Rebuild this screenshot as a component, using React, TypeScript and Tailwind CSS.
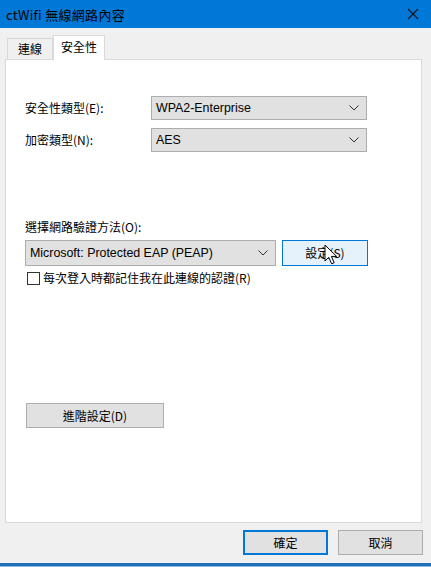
import React from "react";

const font = { fontFamily: '"Noto Sans CJK TC", "Noto Sans", sans-serif' };

function Chevron() {
  return (
    <svg width="10" height="6" viewBox="0 0 10 6" className="shrink-0">
      <path d="M0.5 0.5 L5 5 L9.5 0.5" fill="none" stroke="#333" strokeWidth="1" />
    </svg>
  );
}

function Select({ value, w }: { value: string; w: string }) {
  return (
    <div className={`${w} h-[24px] border border-[#adadad] bg-[#e1e1e1] flex items-center justify-between pl-[4px] pr-[7px] text-[12px] text-black`}>
      <span style={{ fontFamily: '"Liberation Sans", "Noto Sans CJK TC", sans-serif', fontSize: 12.4 }}>{value}</span>
      <Chevron />
    </div>
  );
}

export default function App() {
  return (
    <div className="relative w-[431px] h-[567px] bg-[#f0f0f0] flex flex-col overflow-hidden text-black" style={font}>
      <div className="h-[28px] bg-[#0078d7] flex items-center justify-between pl-[6px] pr-[12px] shrink-0">
        <span className="text-[13px] text-black leading-none tracking-[0.3px]">ctWifi 無線網路內容</span>
        <svg width="12" height="12" viewBox="0 0 12 12">
          <path d="M1 1 L11 11 M11 1 L1 11" stroke="#111" strokeWidth="1.1" />
        </svg>
      </div>
      <div className="flex flex-col pl-[5px] pr-[9px] pt-[7px]">
        <div className="flex items-end pl-[2px] h-[24px] relative z-10">
          <div className="h-[21px] w-[46px] border border-b-0 border-[#d9d9d9] bg-[#f0f0f0] flex items-center justify-center text-[12px] leading-none">
            連線
          </div>
          <div className="h-[25px] w-[52px] -mb-[1px] border border-b-0 border-[#d9d9d9] bg-white flex items-center justify-center text-[12px] leading-none pb-[2px]">
            安全性
          </div>
        </div>
        <div className="h-[464px] border border-[#d9d9d9] bg-white flex flex-col pl-[19px] pt-[36px] text-[12px]">
          <div className="flex items-center h-[24px]">
            <span className="w-[126px]">安全性類型(E):</span>
            <Select value="WPA2-Enterprise" w="w-[216px]" />
          </div>
          <div className="flex items-center h-[24px] mt-[8px]">
            <span className="w-[126px]">加密類型(N):</span>
            <Select value="AES" w="w-[216px]" />
          </div>
          <div className="mt-[69px] leading-none">選擇網路驗證方法(O):</div>
          <div className="flex items-center mt-[7px] h-[26px]">
            <div className="h-[26px] w-[251px] border border-[#adadad] bg-[#e1e1e1] flex items-center justify-between pl-[4px] pr-[7px]">
              <span style={{ fontFamily: '"Liberation Sans", sans-serif', fontSize: 12.4 }}>Microsoft: Protected EAP (PEAP)</span>
              <Chevron />
            </div>
            <div className="relative ml-[6px] h-[26px] w-[86px] border border-[#0078d7] bg-[#e5f1fb] flex items-center justify-center text-[12px]">
              設定(S)
              <svg className="absolute left-[41px] top-[3px]" width="15" height="22" viewBox="0 0 15 22">
                <path d="M1 1 L1 17 L4.8 13.3 L7.6 19.8 L10.2 18.7 L7.4 12.4 L12.6 12.4 Z" fill="#fff" stroke="#000" strokeWidth="1" strokeLinejoin="round" />
              </svg>
            </div>
          </div>
          <div className="flex items-center mt-[5px] h-[14px]">
            <div className="w-[13px] h-[13px] border border-[#333] bg-white ml-[2px]" />
            <span className="ml-[3px]">每次登入時都記住我在此連線的認證(R)</span>
          </div>
          <div className="mt-[118px] ml-[1px] w-[138px] h-[25px] border border-[#adadad] bg-[#e1e1e1] flex items-center justify-center">
            進階設定(D)
          </div>
        </div>
        <div className="flex justify-end gap-[10px] mt-[7px] -mr-[1px] text-[12px]">
          <div className="w-[85px] h-[25px] border-2 border-[#0078d7] bg-[#e1e1e1] flex items-center justify-center">確定</div>
          <div className="w-[85px] h-[25px] border border-[#adadad] bg-[#e1e1e1] flex items-center justify-center">取消</div>
        </div>
      </div>
      <div className="absolute left-0 right-0 bottom-0 h-[4px] bg-[#1e6fb8] border-b border-[#8fb8e0]" />
    </div>
  );
}
